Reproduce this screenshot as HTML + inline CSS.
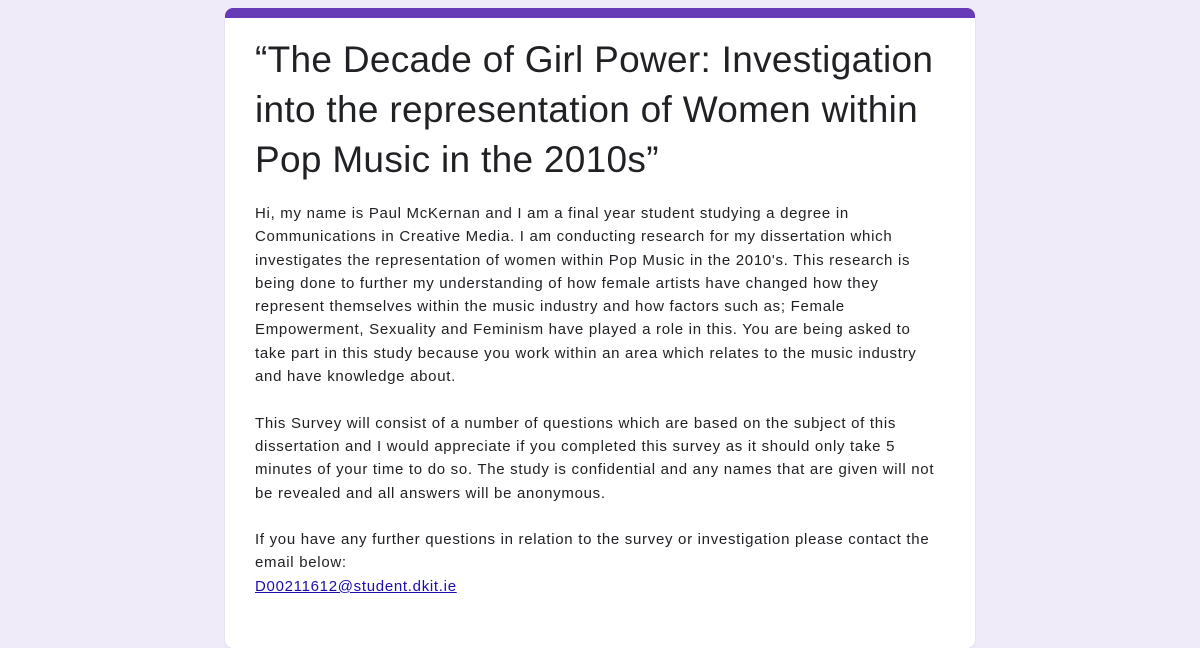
<!DOCTYPE html>
<html><head><meta charset="utf-8"><style>
html,body{margin:0;padding:0;width:1200px;height:630px;overflow:hidden;background:#f0ebf8;font-family:"Liberation Sans",sans-serif;}
.card{position:absolute;left:225px;top:8px;width:750px;height:640px;background:#fff;border-radius:8px;overflow:hidden;box-shadow:0 1px 2px rgba(0,0,0,.08);}
.bar{height:10px;background:#673ab7;}
.title{position:absolute;left:30px;top:27px;font-size:37px;line-height:50px;color:#202124;letter-spacing:0.3px;white-space:nowrap;}
.body{position:absolute;left:30px;top:194px;font-size:15px;line-height:23.3px;color:#202124;letter-spacing:0.7px;white-space:nowrap;}
.body div{height:23.3px}
a{color:#1a0dab;text-decoration:underline;}
</style></head><body>
<div class="card"><div class="bar"></div>
<div class="title">“The Decade of Girl Power: Investigation<br>into the representation of Women within<br>Pop Music in the 2010s”</div>
<div class="body">
<div>Hi, my name is Paul McKernan and I am a final year student studying a degree in</div>
<div>Communications in Creative Media. I am conducting research for my dissertation which</div>
<div>investigates the representation of women within Pop Music in the 2010's. This research is</div>
<div>being done to further my understanding of how female artists have changed how they</div>
<div>represent themselves within the music industry and how factors such as; Female</div>
<div>Empowerment, Sexuality and Feminism have played a role in this. You are being asked to</div>
<div>take part in this study because you work within an area which relates to the music industry</div>
<div>and have knowledge about.</div>
<div></div>
<div>This Survey will consist of a number of questions which are based on the subject of this</div>
<div>dissertation and I would appreciate if you completed this survey as it should only take 5</div>
<div>minutes of your time to do so. The study is confidential and any names that are given will not</div>
<div>be revealed and all answers will be anonymous.</div>
<div></div>
<div>If you have any further questions in relation to the survey or investigation please contact the</div>
<div>email below:</div>
<div><a>D00211612@student.dkit.ie</a></div>
</div>
</div>
</body></html>
